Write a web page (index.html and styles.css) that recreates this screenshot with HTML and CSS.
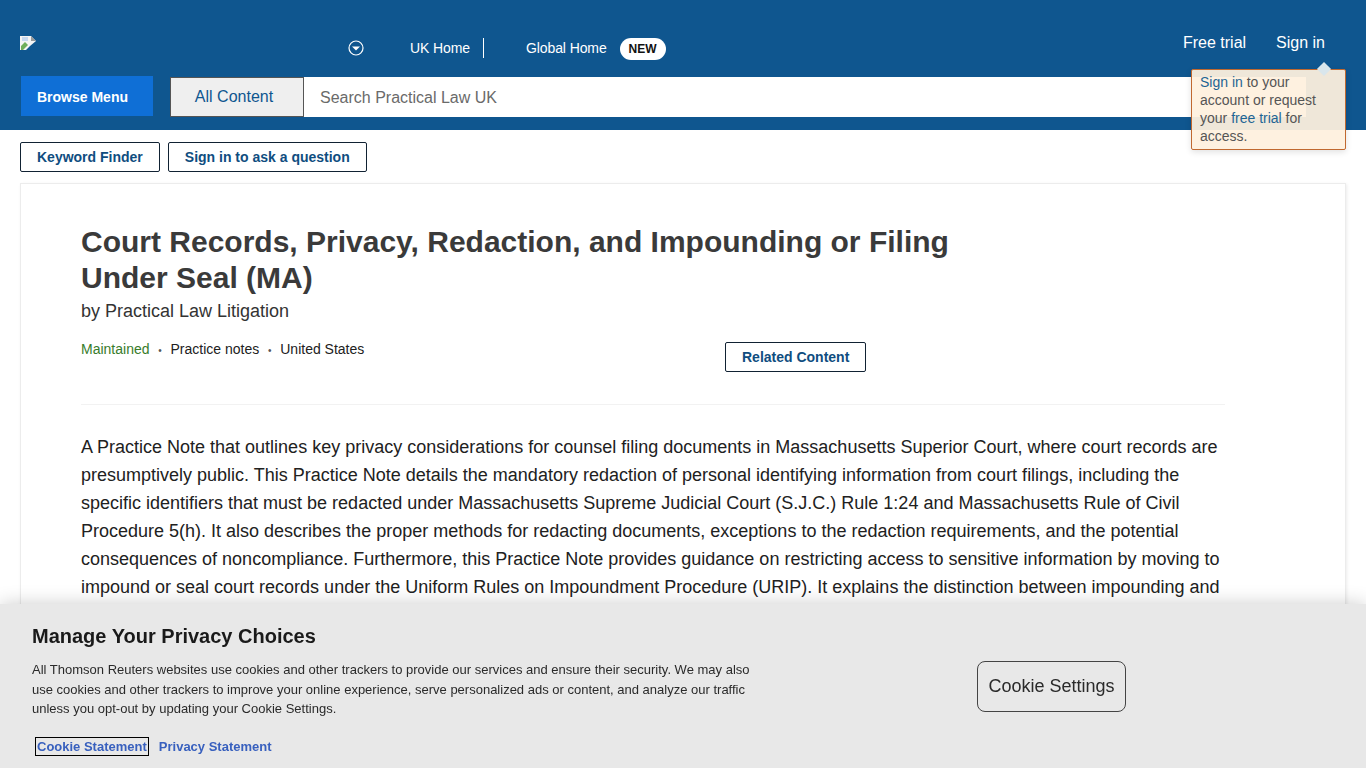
FILE: index.html
```html
<!DOCTYPE html>
<html lang="en">
<head>
    <meta charset="UTF-8">
    <title>Court Records, Privacy, Redaction, and Impounding or Filing Under Seal (MA) - Practical Law</title>
    <link rel="stylesheet" href="styles.css">
</head>
<body>
    <header class="site-header">
        <div class="top-row">
            <svg class="broken-img" width="16" height="16" viewBox="0 0 16 16">
                <path d="M0 0h11l5 5v0l-6 5-4 4H0z" fill="#f4f4f4"/>
                <path d="M1 10l4-4 3 3-5 5H1z" fill="#6fae5a"/>
                <path d="M2 1h6v4H2z" fill="#c6d8f0"/>
                <path d="M11 0l5 5h-5z" fill="#9a9a9a"/>
                <path d="M8 16l8-7v7z" fill="#0f568f"/>
            </svg>
            <svg class="caret-icon" width="16" height="16" viewBox="0 0 16 16">
                <circle cx="8" cy="8" r="7" fill="none" stroke="#fff" stroke-width="1.2"/>
                <path d="M4 6.5h8L8 10.5z" fill="#fff"/>
            </svg>
            <a class="top-link uk-home" href="#">UK Home</a>
            <a class="top-link" href="#">Global Home</a>
            <span class="new-badge">NEW</span>
            <div class="account-links">
                <a href="#">Free trial</a>
                <a href="#">Sign in</a>
            </div>
        </div>
        <div class="search-row">
            <a class="browse-btn" href="#">Browse Menu</a>
            <div class="search-box">
                <span class="search-scope">All Content</span>
                <span class="search-input">Search Practical Law UK</span>
            </div>
        </div>
        <!-- Sign in popup -->
        <div class="signin-tip">
            <a href="#">Sign in</a> to your account or request your <a href="#">free trial</a> for access.
        </div>
    </header>

    <div class="tool-row">
        <a class="outline-btn" href="#">Keyword Finder</a>
        <a class="outline-btn" href="#">Sign in to ask a question</a>
    </div>

    <main class="doc-card">
        <h1>Court Records, Privacy, Redaction, and Impounding or Filing Under Seal (MA)</h1>
        <p class="byline">by Practical Law Litigation</p>
        <div class="meta-row">
            <ul class="meta-list">
                <li class="status">Maintained</li>
                <li>Practice notes</li>
                <li>United States</li>
            </ul>
            <a class="outline-btn" href="#">Related Content</a>
        </div>
        <p class="abstract">A Practice Note that outlines key privacy considerations for counsel filing documents in Massachusetts Superior Court, where court records are presumptively public. This Practice Note details the mandatory redaction of personal identifying information from court filings, including the specific identifiers that must be redacted under Massachusetts Supreme Judicial Court (S.J.C.) Rule 1:24 and Massachusetts Rule of Civil Procedure 5(h). It also describes the proper methods for redacting documents, exceptions to the redaction requirements, and the potential consequences of noncompliance. Furthermore, this Practice Note provides guidance on restricting access to sensitive information by moving to impound or seal court records under the Uniform Rules on Impoundment Procedure (URIP). It explains the distinction between impounding and sealing court records.</p>
    </main>

    <!-- Cookie banner -->
    <div class="cookie-banner">
        <div class="cookie-text">
            <h2>Manage Your Privacy Choices</h2>
            <p>All Thomson Reuters websites use cookies and other trackers to provide our services and ensure their security. We may also use cookies and other trackers to improve your online experience, serve personalized ads or content, and analyze our traffic unless you opt-out by updating your Cookie Settings.</p>
            <div class="cookie-links">
                <a class="focused" href="#">Cookie Statement</a>
                <a href="#">Privacy Statement</a>
            </div>
        </div>
        <button class="cookie-btn" type="button">Cookie Settings</button>
    </div>
</body>
</html>
```

FILE: styles.css
```css
html, body {
    height: 768px;
    overflow: hidden;
}
body {
    margin: 0;
    background-color: #fff;
    color: #212121;
    font-family: "Liberation Sans", Arial, sans-serif;
}
a {
    text-decoration: none;
}

/* Header */
.site-header {
    position: relative;
    height: 130px;
    background-color: #0f568f;
    box-sizing: border-box;
    padding: 0 20px;
}
.top-row {
    display: flex;
    align-items: center;
    height: 76px;
    padding-top: 20px;
    box-sizing: border-box;
    color: #fff;
}
.broken-img {
    margin-top: -8px;
}
.caret-icon {
    margin-left: 312px;
}
.top-link {
    color: #fff;
    font-size: 14px;
    letter-spacing: -0.1px;
}
.uk-home {
    margin-left: 46px;
    padding-right: 13px;
    border-right: 1px solid #fff;
    height: 20px;
    line-height: 20px;
    margin-right: 42px;
}
.new-badge {
    margin: 2px 0 0 13px;
    background-color: #fff;
    color: #111;
    font-size: 12px;
    font-weight: bold;
    line-height: 22px;
    padding: 0 9px;
    border-radius: 11px;
}
.account-links {
    margin-left: auto;
    display: flex;
    gap: 30px;
    padding-right: 21px;
    margin-top: -10px;
}
.account-links a {
    color: #fff;
    font-size: 16px;
}
.search-row {
    display: flex;
    align-items: center;
    height: 40px;
    padding-left: 1px;
    gap: 17px;
}
.browse-btn {
    width: 116px;
    height: 40px;
    padding-left: 16px;
    line-height: 42px;
    background-color: #0f6fd6;
    color: #fff;
    font-size: 14px;
    font-weight: bold;
}
.search-box {
    display: flex;
    flex: 1;
    height: 40px;
    margin: 2px 40px 0 0;
    background-color: #fff;
}
.search-scope {
    width: 126px;
    padding-right: 6px;
    line-height: 38px;
    background-color: #efefef;
    border: 1px solid #555;
    color: #0f568f;
    font-size: 16px;
    text-align: center;
}
.search-input {
    padding-left: 16px;
    line-height: 42px;
    color: #6a6a6a;
    font-size: 16px;
}
.signin-tip {
    position: absolute;
    top: 69px;
    left: 1191px;
    width: 155px;
    height: 81px;
    box-sizing: border-box;
    padding: 3px 8px;
    background-color: rgba(254, 240, 222, 0.94);
    border: 1px solid #c0682f;
    border-radius: 2px;
    box-shadow: 0 2px 6px rgba(0, 0, 0, 0.12);
    color: #555;
    font-size: 14px;
    line-height: 18px;
}
.signin-tip::before {
    content: "";
    position: absolute;
    top: -6px;
    left: 127px;
    width: 10px;
    height: 10px;
    background-color: #d9e6ec;
    transform: rotate(45deg);
}
.signin-tip a {
    color: #1f6594;
}

/* Buttons under the header */
.tool-row {
    display: flex;
    gap: 8px;
    padding: 12px 20px 11px;
}
.outline-btn {
    display: inline-block;
    box-sizing: border-box;
    height: 30px;
    line-height: 28px;
    padding: 0 16px;
    background-color: #fff;
    border: 1px solid #123;
    border-radius: 2px;
    color: #0f4d80;
    font-size: 14px;
    font-weight: bold;
}

/* Document */
.doc-card {
    margin: 0 20px;
    padding: 40px 120px 0 60px;
    border: 1px solid #ececec;
    box-shadow: 1px 1px 3px rgba(0, 0, 0, 0.08);
    height: 500px;
    box-sizing: border-box;
}
h1 {
    margin: 0;
    max-width: 900px;
    color: #3a3a3a;
    font-size: 30px;
    line-height: 36px;
}
.byline {
    margin: 4px 0 0;
    font-size: 18px;
    line-height: 22px;
    color: #333;
}
.meta-row {
    display: flex;
    align-items: flex-start;
    padding: 17px 0 32px;
    border-bottom: 1px solid #f2f2f2;
}
.meta-list {
    display: flex;
    width: 644px;
    margin: 0;
    padding: 0;
    list-style: none;
    font-size: 14px;
    line-height: 20px;
}
.meta-list li + li::before {
    content: "\2022";
    margin: 0 8.75px;
    color: #555;
    font-size: 10px;
}
.status {
    color: #387c2b;
}
.meta-row .outline-btn {
    margin-top: 3px;
}
.abstract {
    margin: 28px 0 0;
    color: #212121;
    font-size: 18px;
    line-height: 28px;
}

/* Cookie banner */
.cookie-banner {
    position: fixed;
    left: 0;
    right: 0;
    bottom: 0;
    height: 164px;
    box-sizing: border-box;
    display: flex;
    padding: 20px 32px 0;
    background-color: #e8e8e8;
    box-shadow: 0 0 18px rgba(0, 0, 0, 0.2);
}
.cookie-text {
    width: 730px;
}
.cookie-text h2 {
    margin: 0;
    color: #1a1a1a;
    font-size: 20px;
    line-height: 24px;
}
.cookie-text p {
    margin: 12px 0 0;
    color: #2a2a2a;
    font-size: 13px;
    line-height: 19.5px;
}
.cookie-links {
    display: flex;
    gap: 11px;
    margin-top: 19.5px;
    padding-left: 4px;
}
.cookie-links a {
    color: #3860be;
    font-size: 13px;
    font-weight: bold;
    line-height: 17px;
}
.cookie-links .focused {
    outline: 1.5px solid #000;
    padding: 0 1px;
}
.cookie-btn {
    align-self: flex-start;
    margin: 37px 0 0 215px;
    width: 149px;
    height: 51px;
    background-color: #e8e8e8;
    border: 1px solid #444;
    border-radius: 8px;
    color: #2a2a2a;
    font-family: inherit;
    font-size: 18px;
}
```
